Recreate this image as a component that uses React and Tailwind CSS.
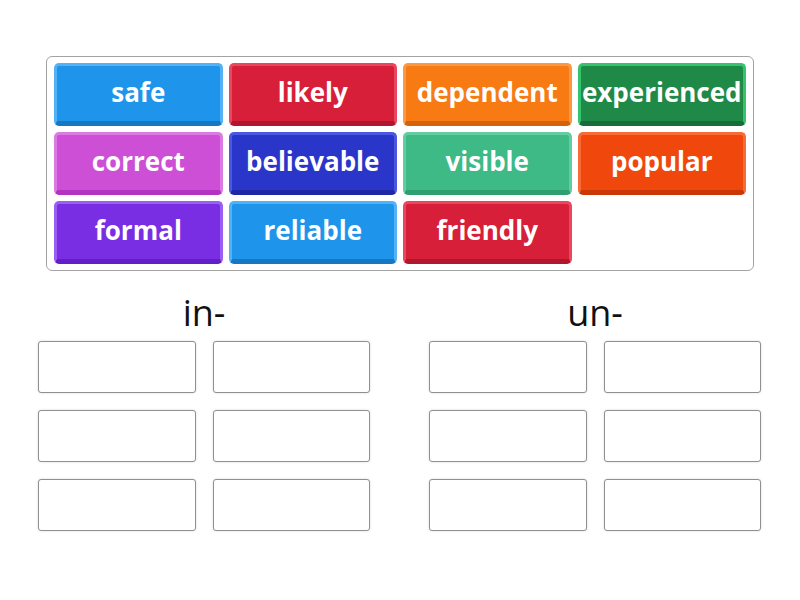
const tiles = [
  { word: 'safe', cls: 'bg-[#1e94ea] border-[#52b2f5] border-b-[#1677c2]' },
  { word: 'likely', cls: 'bg-[#d71f3a] border-[#e8475e] border-b-[#b0172d]' },
  { word: 'dependent', cls: 'bg-[#f77a12] border-[#fb9844] border-b-[#d4620a]' },
  { word: 'experienced', cls: 'bg-[#1f8a48] border-[#33c46d] border-b-[#186c38]' },
  { word: 'correct', cls: 'bg-[#cc4fd6] border-[#dc7ae3] border-b-[#b432c2]' },
  { word: 'believable', cls: 'bg-[#2a36c9] border-[#4a57e0] border-b-[#1f27a6]' },
  { word: 'visible', cls: 'bg-[#3dba86] border-[#62cd9f] border-b-[#2e9f6f]' },
  { word: 'popular', cls: 'bg-[#ef470c] border-[#f86a36] border-b-[#c93806]' },
  { word: 'formal', cls: 'bg-[#7a2ee4] border-[#9a5ef0] border-b-[#621ec7]' },
  { word: 'reliable', cls: 'bg-[#1e94ea] border-[#52b2f5] border-b-[#1677c2]' },
  { word: 'friendly', cls: 'bg-[#d71f3a] border-[#e8475e] border-b-[#b0172d]' },
];

function DropGroup({ label }) {
  return (
    <div className="w-[332px] flex flex-col">
      <h2 className="text-center text-[36px] leading-[48px] text-[#111]">{label}</h2>
      <div className="mt-[4px] grid grid-cols-2 gap-x-[17px] gap-y-[17px]">
        {[0, 1, 2, 3, 4, 5].map((i) => (
          <div
            key={i}
            className="h-[52px] rounded-[3px] border border-[#8f8f8f] bg-white shadow-[0_0_3px_rgba(0,0,0,0.12)]"
          />
        ))}
      </div>
    </div>
  );
}

export default function App() {
  return (
    <div className="w-[800px] h-[600px] bg-white font-['Open_Sans',sans-serif] pt-[56px]">
      {/* word bank */}
      <div className="mx-[46px] rounded-[6px] border border-[#a3a3a3] px-[7px] py-[6px]">
        <div className="grid grid-cols-4 gap-x-[6px] gap-y-[6px]">
          {tiles.map((t) => (
            <div
              key={t.word}
              className={`h-[63px] pb-[3px] rounded-[5px] border-[3px] border-b-[5px] flex items-center justify-center text-white font-bold text-[26px] leading-none ${t.cls}`}
            >
              {t.word}
            </div>
          ))}
        </div>
      </div>

      {/* targets */}
      <div className="mt-[18px] flex pl-[38px] gap-[59px]">
        <DropGroup label="in-" />
        <DropGroup label="un-" />
      </div>
    </div>
  );
}
